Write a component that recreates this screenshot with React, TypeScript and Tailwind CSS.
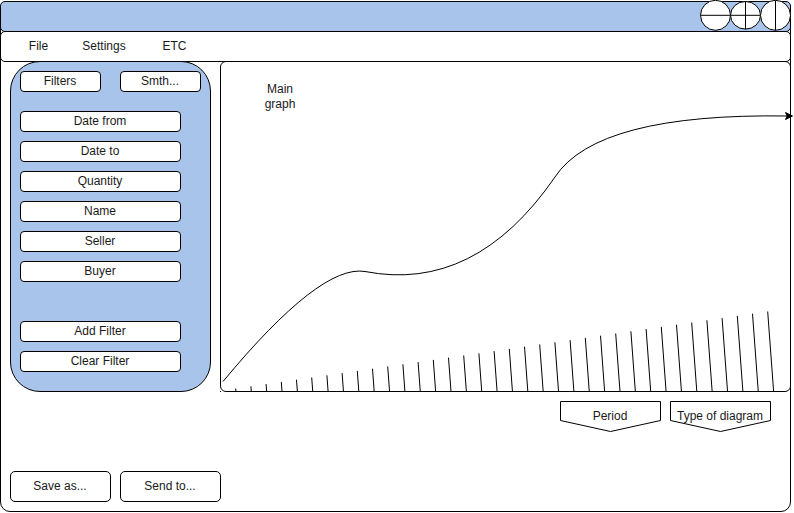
const menuItems = [
  { label: "File", width: "w-[51px]" },
  { label: "Settings", width: "w-[80px]" },
  { label: "ETC", width: "w-[61px]" },
];

const filters = ["Date from", "Date to", "Quantity", "Name", "Seller", "Buyer"];
const actions = ["Add Filter", "Clear Filter"];

const bars = Array.from({ length: 36 }, (_, i) => {
  const x = 767.7 - 15.2 * i;
  const y = 311.5 + 2.2 * i;
  return { x, y, bottom: x + (391.5 - y) * 0.074 };
});

function PanelButton({ label, className }: { label: string; className: string }) {
  return (
    <button
      className={`flex h-[21px] items-center justify-center rounded-[4px] border border-black bg-white pr-px pb-px leading-[14px] ${className}`}
    >
      {label}
    </button>
  );
}

function FooterButton({ label }: { label: string }) {
  return (
    <button className="flex h-[31px] w-[101px] items-center justify-center rounded-[5px] border border-black bg-white pr-px pb-px">
      {label}
    </button>
  );
}

function WindowControls() {
  return (
    <svg width="91" height="31" viewBox="0 0 91 31" className="-mt-[2px] -mr-px shrink-0" fill="white" stroke="black">
      <circle cx="15.5" cy="15.3" r="15" />
      <path d="M0.5 15.3H30.5" />
      <ellipse cx="45.5" cy="15.3" rx="15" ry="13.8" />
      <path d="M30.5 15.3H60.5M45.5 1.5V29" />
      <circle cx="75.5" cy="15.3" r="15" />
      <path d="M75.5 0.5V30.5" />
    </svg>
  );
}

function Dropdown({ label }: { label: string }) {
  return (
    <button className="relative flex h-[31px] w-[101px] items-center justify-center pr-px pb-[2px] whitespace-nowrap">
      <svg width="101" height="31" className="absolute inset-0" fill="white" stroke="black">
        <path d="M0.5 0.5H100.5V19.5L50.5 30.5L0.5 19.5Z" />
      </svg>
      <span className="relative leading-[14px]">{label}</span>
    </button>
  );
}

function Graph() {
  return (
    <section className="relative -mr-px h-[331px] w-[571px] rounded-[6px] border border-black bg-white">
      <p className="mt-[20px] ml-[39px] w-[40px] text-center leading-[15px]">Main graph</p>
      <svg
        width="574"
        height="332"
        viewBox="220 61 574 332"
        className="absolute -top-px -left-px overflow-visible"
        fill="none"
        stroke="black"
      >
        <path d="M223 381.5Q320.4 264 365 271.5Q475 293 555 177Q597 113 788 116" />
        <path d="M792.5 116L785.5 119.5L787.2 116L785.5 112.5Z" fill="black" />
        <path d="M220 391.5H221" />
        {bars.map((bar) => (
          <line key={bar.x} x1={bar.x} y1={bar.y} x2={bar.bottom} y2="391.5" />
        ))}
      </svg>
    </section>
  );
}

export default function App() {
  return (
    <div className="h-[513px] w-[794px] overflow-hidden bg-white pt-px font-['Liberation_Sans',Arial,sans-serif] text-[12px] text-[#1a1a1a]">
      <div className="flex h-[511px] w-[791px] flex-col rounded-[10px] border border-black bg-white">
        <header className="-mx-px -mt-px flex h-[31px] shrink-0 justify-end rounded-[5px] border border-black bg-[#a9c4eb]">
          <WindowControls />
        </header>
        <nav className="-mx-px -mt-px flex h-[31px] shrink-0 items-center rounded-[5px] border border-black bg-white pb-px pl-[12px]">
          {menuItems.map((item) => (
            <button key={item.label} className={`text-center ${item.width}`}>
              {item.label}
            </button>
          ))}
        </nav>
        <main className="-mt-px flex shrink-0 justify-between pl-[9px]">
          <aside className="h-[331px] w-[201px] rounded-[30px] border border-black bg-[#a9c4eb] px-[9px] pt-[9px]">
            <div className="flex justify-between">
              <PanelButton label="Filters" className="w-[81px]" />
              <PanelButton label="Smth..." className="w-[81px]" />
            </div>
            <div className="mt-[19px] flex flex-col gap-[9px]">
              {filters.map((label) => (
                <PanelButton key={label} label={label} className="w-[161px]" />
              ))}
            </div>
            <div className="mt-[39px] flex flex-col gap-[9px]">
              {actions.map((label) => (
                <PanelButton key={label} label={label} className="w-[161px]" />
              ))}
            </div>
          </aside>
          <Graph />
        </main>
        <div className="mt-[9px] flex justify-end gap-[9px] pr-[19px]">
          <Dropdown label="Period" />
          <Dropdown label="Type of diagram" />
        </div>
        <footer className="mt-[39px] flex gap-[9px] pl-[9px]">
          <FooterButton label="Save as..." />
          <FooterButton label="Send to..." />
        </footer>
      </div>
    </div>
  );
}
